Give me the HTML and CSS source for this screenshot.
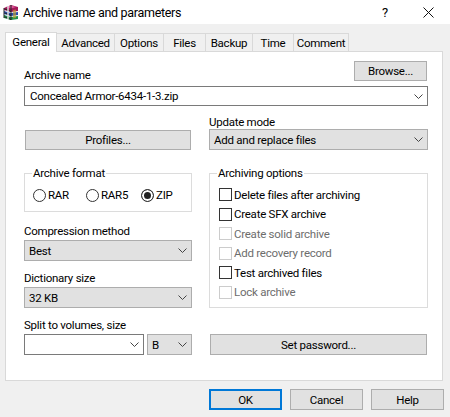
FILE: index.html
```html
<!DOCTYPE html>
<html>
    <head>
        <title>Archive name and parameters</title>
        <link rel="stylesheet" href="styles.css">
    </head>
    <body class="body">
        <div class="titlebar">
            <svg class="app-icon" width="16" height="17" viewBox="0 0 16 17">
                <path d="M1 4 L8 1 L15 3 L15 7 L8 8 L1 6 Z" fill="#a3195b"/>
                <path d="M3 3 L8 1.5 L13 3 L8 4.5 Z" fill="#e0569a"/>
                <path d="M1 7 L8 9 L15 8 L15 11 L8 12 L1 10 Z" fill="#2a4fb0"/>
                <path d="M1 11 L8 13 L15 12 L15 15 L8 16 L1 14 Z" fill="#1c8f4a"/>
                <path d="M2 5 L8 7.5 M2 9 L8 11.5 M2 13 L8 15.5" stroke="#222" stroke-width="1"/>
                <path d="M8 1 L8 16 M1 4 L1 14" stroke="#222" stroke-width="1"/>
                <path d="M5 2 L5 15" stroke="#ddd" stroke-width="1.5"/>
                <path d="M10 6 L13 5.5 L13 14 L10 14.5 Z" fill="#c9a227" opacity="0.6"/>
            </svg>
            <span class="title">Archive name and parameters</span>
            <span class="help-mark">?</span>
            <svg class="close-x" width="11" height="11" viewBox="0 0 11 11">
                <path d="M0.5 0.5 L10.5 10.5 M10.5 0.5 L0.5 10.5" stroke="#111" stroke-width="1" fill="none"/>
            </svg>
        </div>

        <div class="dialog">
            <div class="tabs">
                <div class="tab tab-active">General</div>
                <div class="tab tab-advanced">Advanced</div>
                <div class="tab tab-options">Options</div>
                <div class="tab tab-files">Files</div>
                <div class="tab tab-backup">Backup</div>
                <div class="tab tab-time">Time</div>
                <div class="tab tab-comment">Comment</div>
            </div>

            <div class="panel">
                <div class="name-row">
                    <label class="label">Archive name</label>
                    <div class="btn btn-browse">Browse...</div>
                </div>
                <div class="combo combo-name">
                    <span>Concealed Armor-6434-1-3.zip</span>
                    <svg class="chevron" width="9" height="5" viewBox="0 0 9 5"><path d="M0.5 0.5 L4.5 4.5 L8.5 0.5" stroke="#444" fill="none"/></svg>
                </div>

                <div class="columns">
                    <div class="col-left">
                        <div class="btn btn-profiles">Profiles...</div>

                        <div class="group group-format">
                            <span class="legend">Archive format</span>
                            <div class="radios">
                                <div class="radio-item radio-rar"><span class="radio"></span>RAR</div>
                                <div class="radio-item radio-rar5"><span class="radio"></span>RAR5</div>
                                <div class="radio-item"><span class="radio radio-on"></span>ZIP</div>
                            </div>
                        </div>

                        <label class="label label-method">Compression method</label>
                        <div class="combo combo-grey">
                            <span>Best</span>
                            <svg class="chevron" width="9" height="5" viewBox="0 0 9 5"><path d="M0.5 0.5 L4.5 4.5 L8.5 0.5" stroke="#444" fill="none"/></svg>
                        </div>

                        <label class="label label-dict">Dictionary size</label>
                        <div class="combo combo-grey">
                            <span>32 KB</span>
                            <svg class="chevron" width="9" height="5" viewBox="0 0 9 5"><path d="M0.5 0.5 L4.5 4.5 L8.5 0.5" stroke="#444" fill="none"/></svg>
                        </div>

                        <label class="label label-dict">Split to volumes, size</label>
                        <div class="split-row">
                            <div class="combo combo-split">
                                <span></span>
                                <svg class="chevron" width="9" height="5" viewBox="0 0 9 5"><path d="M0.5 0.5 L4.5 4.5 L8.5 0.5" stroke="#444" fill="none"/></svg>
                            </div>
                            <div class="combo combo-grey combo-unit">
                                <span>B</span>
                                <svg class="chevron" width="9" height="5" viewBox="0 0 9 5"><path d="M0.5 0.5 L4.5 4.5 L8.5 0.5" stroke="#444" fill="none"/></svg>
                            </div>
                        </div>
                    </div>

                    <div class="col-right">
                        <label class="label label-update">Update mode</label>
                        <div class="combo combo-grey">
                            <span>Add and replace files</span>
                            <svg class="chevron" width="9" height="5" viewBox="0 0 9 5"><path d="M0.5 0.5 L4.5 4.5 L8.5 0.5" stroke="#444" fill="none"/></svg>
                        </div>

                        <div class="group group-options">
                            <span class="legend">Archiving options</span>
                            <div class="check-item"><span class="check"></span>Delete files after archiving</div>
                            <div class="check-item"><span class="check"></span>Create SFX archive</div>
                            <div class="check-item check-off"><span class="check"></span>Create solid archive</div>
                            <div class="check-item check-off"><span class="check"></span>Add recovery record</div>
                            <div class="check-item"><span class="check"></span>Test archived files</div>
                            <div class="check-item check-off"><span class="check"></span>Lock archive</div>
                        </div>

                        <div class="btn btn-password">Set password...</div>
                    </div>
                </div>
            </div>

            <div class="footer">
                <div class="btn btn-foot btn-ok">OK</div>
                <div class="btn btn-foot">Cancel</div>
                <div class="btn btn-foot">Help</div>
            </div>
        </div>
    </body>
</html>
```

FILE: styles.css
```css
html,body{
    margin: 0;
    padding: 0;
}
.body{
    width: 450px;
    height: 417px;
    overflow: hidden;
    background-color: #f0f0f0;
    color: #000;
    font-family: Roboto, "Noto Sans", sans-serif;
    font-size: 11.5px;
    letter-spacing: -0.25px;
}
.titlebar{
    height: 24px;
    background-color: #fff;
    display: flex;
    align-items: center;
    padding-left: 3px;
    box-sizing: border-box;
}
.app-icon{
    flex: none;
}
.title{
    margin-left: 4px;
    font-size: 12.5px;
    letter-spacing: -0.3px;
    width: 359px;
}
.help-mark{
    font-size: 13px;
    width: 41px;
}
.close-x{
    flex: none;
}

.dialog{
    padding: 8px 7px 0 5px;
}
.tabs{
    display: flex;
    align-items: flex-end;
    height: 19px;
    position: relative;
    z-index: 1;
}
.tab{
    height: 18px;
    box-sizing: border-box;
    border: 1px solid #d9d9d9;
    border-bottom: 0;
    border-left: 0;
    display: flex;
    align-items: center;
    justify-content: center;
}
.tab-active{
    width: 52px;
    height: 20px;
    margin-bottom: -1px;
    padding-bottom: 2px;
    background-color: #fff;
    border-left: 1px solid #d9d9d9;
}
.tab-advanced{ width: 58px; }
.tab-options{ width: 49px; }
.tab-files{ width: 42px; }
.tab-backup{ width: 47px; }
.tab-time{ width: 41px; }
.tab-comment{ width: 55px; }

.panel{
    height: 330px;
    box-sizing: border-box;
    background-color: #fff;
    border: 1px solid #d9d9d9;
    padding: 9px 14px 0 18px;
}
.label{
    display: block;
    line-height: 16px;
}
.name-row{
    display: flex;
    justify-content: space-between;
    align-items: flex-end;
    padding-right: 1px;
}
.name-row .label{
    margin-bottom: -2px;
}
.btn{
    box-sizing: border-box;
    background-color: #e1e1e1;
    border: 1px solid #adadad;
    display: flex;
    align-items: center;
    justify-content: center;
}
.btn-browse{
    width: 73px;
    height: 20px;
}
.combo{
    box-sizing: border-box;
    height: 21px;
    display: flex;
    align-items: center;
    justify-content: space-between;
    padding: 0 4px 0 4px;
    border: 1px solid #7a7a7a;
    background-color: #fff;
}
.combo-name{
    height: 20px;
    margin-top: 5px;
    padding-left: 5px;
}
.combo-grey{
    background-color: #e1e1e1;
    border-color: #adadad;
}
.chevron{
    flex: none;
}

.columns{
    display: grid;
    grid-template-columns: 168px 219px;
    column-gap: 17px;
}
.btn-profiles{
    height: 20px;
    margin: 24px 1px 0 1px;
}
.group{
    position: relative;
    box-sizing: border-box;
    border: 1px solid #dcdcdc;
    margin-top: 23px;
}
.legend{
    position: absolute;
    top: -9px;
    left: 7px;
    padding: 0 1px;
    line-height: 16px;
    background-color: #fff;
}
.group-format{
    height: 39px;
}
.radios{
    display: flex;
    padding: 13px 0 0 8px;
}
.radio-item{
    display: flex;
    align-items: center;
    height: 16px;
}
.radio-rar{ width: 53px; }
.radio-rar5{ width: 55px; }
.radio{
    box-sizing: border-box;
    width: 13px;
    height: 13px;
    margin-right: 2px;
    border: 1px solid #333;
    border-radius: 50%;
    background-color: #fff;
}
.radio-on{
    background-color: #222;
    box-shadow: inset 0 0 0 2px #fff;
}
.label-method{
    margin-top: 11px;
    margin-bottom: 1px;
}
.label-dict{
    margin-top: 9px;
    margin-bottom: 1px;
}
.split-row{
    display: flex;
    gap: 3px;
}
.combo-split{
    width: 120px;
}
.combo-unit{
    width: 45px;
}

.label-update{
    margin-top: 8px;
    margin-bottom: -1px;
}
.group-options{
    height: 135px;
    padding: 11px 0 0 9px;
}
.check-item{
    display: flex;
    align-items: center;
    height: 19.5px;
}
.check{
    box-sizing: border-box;
    width: 13px;
    height: 13px;
    margin-right: 2px;
    border: 1px solid #333;
    background-color: #fff;
}
.check-off{
    color: #6d6d6d;
}
.check-off .check{
    border-color: #ccc;
}
.btn-password{
    height: 21px;
    margin: 26px 1px 0 1px;
}

.footer{
    display: flex;
    justify-content: flex-end;
    gap: 8px;
    margin-top: 8px;
    margin-right: -1px;
}
.btn-foot{
    width: 73px;
    height: 21px;
}
.btn-ok{
    border: 2px solid #0078d7;
}
```
